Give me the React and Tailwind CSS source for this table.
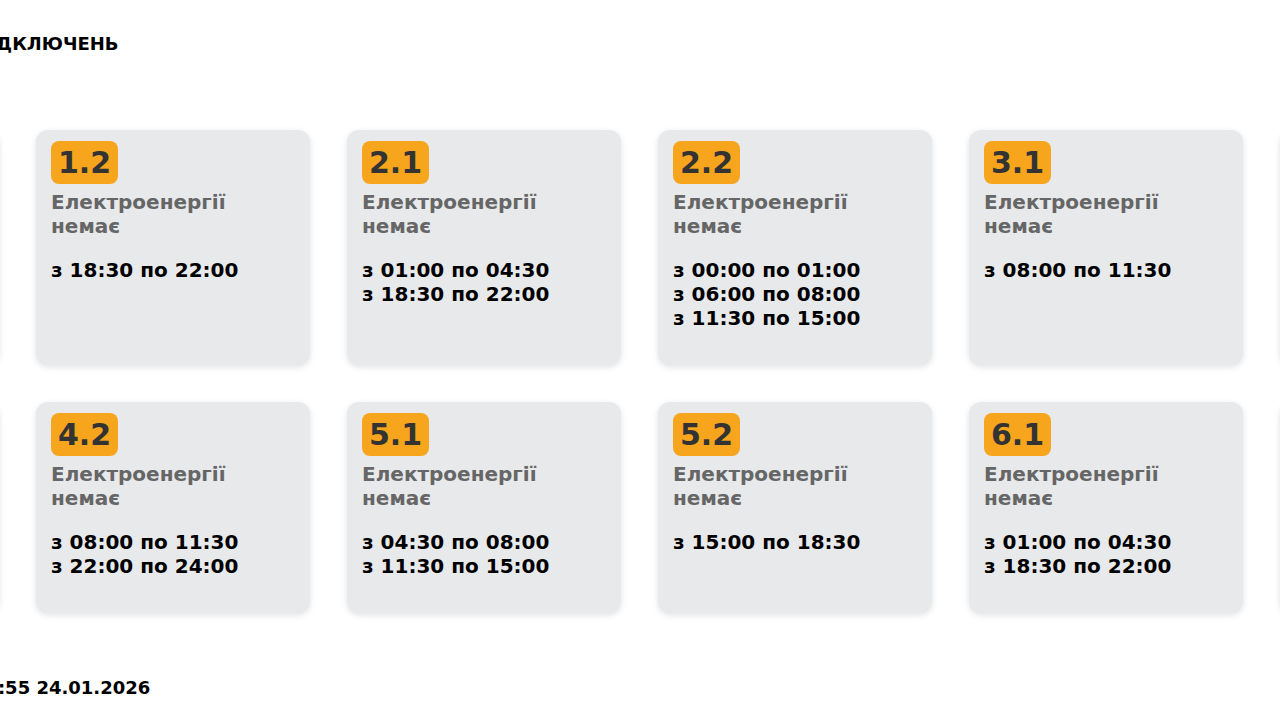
import React from 'react';

const groups = [
  { id: '1.1', times: ['з 04:30 по 08:00', 'з 15:00 по 18:30'] },
  { id: '1.2', times: ['з 18:30 по 22:00'] },
  { id: '2.1', times: ['з 01:00 по 04:30', 'з 18:30 по 22:00'] },
  { id: '2.2', times: ['з 00:00 по 01:00', 'з 06:00 по 08:00', 'з 11:30 по 15:00'] },
  { id: '3.1', times: ['з 08:00 по 11:30'] },
  { id: '3.2', times: ['з 11:30 по 15:00', 'з 22:00 по 24:00'] },
  { id: '4.1', times: ['з 15:00 по 18:30'] },
  { id: '4.2', times: ['з 08:00 по 11:30', 'з 22:00 по 24:00'] },
  { id: '5.1', times: ['з 04:30 по 08:00', 'з 11:30 по 15:00'] },
  { id: '5.2', times: ['з 15:00 по 18:30'] },
  { id: '6.1', times: ['з 01:00 по 04:30', 'з 18:30 по 22:00'] },
  { id: '6.2', times: ['з 08:00 по 11:30'] },
];

const GroupCard = ({ id, times }) => (
  <div className="bg-[#e8e9eb] rounded-xl pt-[11px] px-[15px] pb-[35px] shadow-[0_2px_6px_rgba(0,0,0,0.12)]">
    <div className="w-fit bg-[#f6a51c] text-[#333333] rounded-lg text-[30px] leading-[35px] px-[7px] py-1">
      {id}
    </div>
    <p className="mt-[6px] text-[20px] leading-6 text-[#666666]">Електроенергії немає</p>
    <div className="mt-5 text-[20px] leading-6 text-black">
      {times.map((t) => (
        <p key={t}>{t}</p>
      ))}
    </div>
  </div>
);

export default function App() {
  return (
    <div className="w-full h-[720px] overflow-hidden flex justify-center bg-white font-['DejaVu_Sans',sans-serif] font-bold">
      <div className="w-[1830px] shrink-0">
        <h1 className="mt-8 ml-[13px] text-[18px] leading-6 text-black">ГРАФІК ПОГОДИННИХ ВІДКЛЮЧЕНЬ</h1>
        <div className="mt-[74px] grid grid-cols-[repeat(6,274px)] gap-[37px]">
          {groups.map((g) => (
            <GroupCard key={g.id} {...g} />
          ))}
        </div>
        <p className="mt-[63px] ml-[67px] text-[18px] leading-6 text-black">Дата оновлення: 13:55 24.01.2026</p>
      </div>
    </div>
  );
}
